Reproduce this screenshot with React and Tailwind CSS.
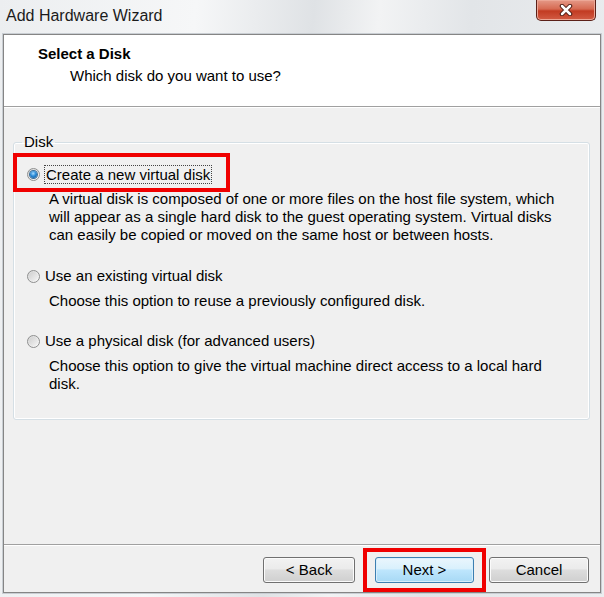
import React from 'react';

const font = "font-['Liberation_Sans',Arial,sans-serif]";

function Radio({ checked }) {
    return (
        <span className="relative flex items-center justify-center w-[13px] h-[13px] rounded-full border border-[#8e8f8f] bg-[linear-gradient(135deg,#d8d8d8,#fbfbfb)] shrink-0">
            {checked ? (
                <span className="w-[7px] h-[7px] rounded-full bg-[radial-gradient(circle_at_45%_35%,#a8dcff_0%,#2a8ad6_45%,#0b4f8f_100%)] ring-1 ring-[#3b6e99]" />
            ) : (
                <span className="w-[9px] h-[9px] rounded-full bg-[linear-gradient(135deg,#cfcfcf,#f4f4f4)]" />
            )}
        </span>
    );
}

function Option({ checked, focus, label, children, className }) {
    return (
        <div className={className}>
            <div className="flex items-center h-[20px] pl-[13px]">
                <Radio checked={checked} />
                <span className={focus ? 'ml-[4px] px-[1px] leading-[17px] border border-dotted border-[#444]' : 'ml-[5px]'}>
                    {label}
                </span>
            </div>
            <p className="mt-[6px] pl-[35px] pr-[20px] leading-[18px]">{children}</p>
        </div>
    );
}

function Button({ children, primary, className }) {
    return (
        <button
            className={
                'h-[26px] rounded-[3px] border text-[15px] text-black ' +
                (primary
                    ? 'border-[#3c7fb1] bg-[linear-gradient(to_bottom,#eaf6fd_0%,#d9f0fc_45%,#bee6fd_50%,#a7d9f5_100%)] shadow-[inset_0_0_0_1px_#d8eefb] '
                    : 'border-[#707070] bg-[linear-gradient(to_bottom,#f2f2f2_0%,#ebebeb_45%,#dddddd_50%,#cfcfcf_100%)] shadow-[inset_0_0_0_1px_#fbfbfb] ') +
                className
            }
        >
            {children}
        </button>
    );
}

export default function App() {
    return (
        <div className={`relative w-[604px] h-[597px] flex flex-col text-[15px] text-black ${font} bg-[linear-gradient(95deg,#eceef0_0%,#f6f7f8_30%,#dfe2e5_48%,#f2f3f4_58%,#e2e5e8_72%,#eceef0_100%)]`}>
            {/* title bar */}
            <div className="h-[34px] flex items-start shrink-0">
                <span className="pl-[6px] pt-[4px] text-[16px] text-[#1b1b1b]">Add Hardware Wizard</span>
                <div className="ml-auto mr-[8px] w-[60px] h-[21px] flex items-center justify-center rounded-b-[5px] border border-t-0 border-[#5b2018] bg-[linear-gradient(to_bottom,#e59987_0%,#d66a52_45%,#c23b22_55%,#d25c44_100%)] shadow-[inset_0_0_0_1px_#eca796]">
                    <svg width="14" height="12" viewBox="0 0 14 12">
                        <path d="M3 2 L11 10 M11 2 L3 10" stroke="#4a1a12" strokeWidth="4.5" strokeLinecap="round" />
                        <path d="M3 2 L11 10 M11 2 L3 10" stroke="#ffffff" strokeWidth="2.5" strokeLinecap="round" />
                    </svg>
                </div>
            </div>

            {/* window body */}
            <div className="mx-[3px] mb-[4px] flex-1 flex flex-col border border-[#858585] bg-[#f0f0f0] shadow-[0_0_0_1px_#c9ced3]">
                {/* header */}
                <div className="h-[72px] shrink-0 bg-white pt-[10px] pl-[34px] border-b border-[#a0a0a0]">
                    <h1 className="font-bold text-[15px] leading-[18px]">Select a Disk</h1>
                    <p className="mt-[4px] pl-[32px] leading-[18px]">Which disk do you want to use?</p>
                </div>
                <div className="h-px bg-white shrink-0" />

                {/* content */}
                <div className="flex-1 px-[9px] pt-[26px]">
                    <fieldset className="relative w-[577px] h-[286px] rounded-[3px] border border-[#d5dfe5] shadow-[inset_0_0_0_1px_#ffffff]">
                        <legend className="ml-[8px] px-[2px] leading-[16px]">Disk</legend>
                        <div className="absolute left-[-1px] top-[3px] w-[217px] h-[39px] border-[4px] border-[#f00000]" />
                        <Option checked focus label="Create a new virtual disk" className="mt-[14px]">
                            A virtual disk is composed of one or more files on the host file system, which will appear as a single hard disk to the guest operating system. Virtual disks can easily be copied or moved on the same host or between hosts.
                        </Option>
                        <Option label="Use an existing virtual disk" className="mt-[22px]">
                            Choose this option to reuse a previously configured disk.
                        </Option>
                        <Option label="Use a physical disk (for advanced users)" className="mt-[21px]">
                            Choose this option to give the virtual machine direct access to a local hard disk.
                        </Option>
                    </fieldset>
                </div>

                {/* footer */}
                <div className="h-px bg-[#a0a0a0] shrink-0" />
                <div className="h-px bg-white shrink-0" />
                <div className="h-[46px] shrink-0 flex items-start justify-end pt-[11px] pr-[11px]">
                    <Button className="w-[92px]">&lt; Back</Button>
                    <Button primary className="w-[99px] ml-[20px]">Next &gt;</Button>
                    <Button className="w-[100px] ml-[15px]">Cancel</Button>
                </div>
            </div>

            <div className="absolute left-[363px] top-[548px] w-[123px] h-[44px] border-[4px] border-[#f00000]" />
        </div>
    );
}
